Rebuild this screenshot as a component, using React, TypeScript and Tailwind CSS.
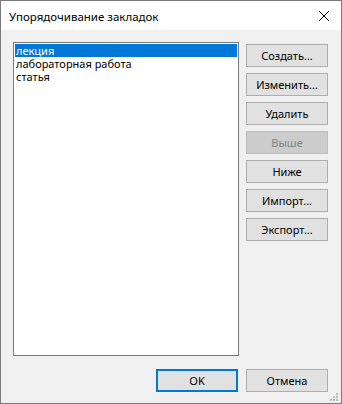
import React from "react";

const font = { fontFamily: '"Noto Sans", "Liberation Sans", sans-serif' };

function Btn({ label, disabled }: { label: string; disabled?: boolean }) {
  return (
    <div
      className={
        "h-[23px] w-[82px] flex items-center justify-center text-[11px] leading-[13px] border " +
        (disabled
          ? "bg-[#cccccc] border-[#bfbfbf] text-[#838383]"
          : "bg-[#e1e1e1] border-[#adadad] text-black")
      }
    >
      {label}
    </div>
  );
}

export default function App() {
  const items = ["лекция", "лабораторная работа", "статья"];
  return (
    <div
      className="relative w-[342px] h-[404px] border border-[#7a7a7a] flex flex-col bg-[#f0f0f0] overflow-hidden"
      style={font}
    >
      <div className="h-[29px] bg-white flex items-center justify-between pl-[8px] pr-[9px] shrink-0">
        <span className="text-[11.5px] text-black leading-[13px] mt-[1px]">Упорядочивание закладок</span>
        <svg width="12" height="12" viewBox="0 0 12 12" className="mr-[2px]">
          <path d="M1 1 L11 11 M11 1 L1 11" stroke="#000" strokeWidth="1" fill="none" />
        </svg>
      </div>
      <div className="flex-1 flex flex-col pl-[12px] pt-[12px]">
        <div className="flex">
          <div className="w-[226px] h-[314px] bg-white border border-[#7a7a7a] p-[1px] shrink-0">
            {items.map((t, i) => (
              <div
                key={t}
                className={
                  "h-[13px] flex items-center pl-[1px] text-[11px] leading-[13px] whitespace-nowrap " +
                  (i === 0 ? "bg-[#0078d7] text-white" : "text-black")
                }
              >
                {t}
              </div>
            ))}
          </div>
          <div className="flex flex-col gap-[6px] ml-[7px] pt-[2px]">
            <Btn label="Создать..." />
            <Btn label="Изменить..." />
            <Btn label="Удалить" />
            <Btn label="Выше" disabled />
            <Btn label="Ниже" />
            <Btn label="Импорт..." />
            <Btn label="Экспорт..." />
          </div>
        </div>
        <div className="flex gap-[8px] mt-[13px] ml-[143px]">
          <div className="h-[23px] w-[82px] flex items-center justify-center text-[11px] leading-[13px] bg-[#e1e1e1] border-2 border-[#0078d7] text-black">
            OK
          </div>
          <Btn label="Отмена" />
        </div>
      </div>
      <div className="absolute right-[3px] bottom-[2px] w-[8px] h-[8px]">
        <div className="absolute left-[6px] top-0 w-[2px] h-[2px] bg-[#bcbcbc]" />
        <div className="absolute left-[3px] top-[3px] w-[2px] h-[2px] bg-[#bcbcbc]" />
        <div className="absolute left-[6px] top-[3px] w-[2px] h-[2px] bg-[#bcbcbc]" />
        <div className="absolute left-0 top-[6px] w-[2px] h-[2px] bg-[#bcbcbc]" />
        <div className="absolute left-[3px] top-[6px] w-[2px] h-[2px] bg-[#bcbcbc]" />
        <div className="absolute left-[6px] top-[6px] w-[2px] h-[2px] bg-[#bcbcbc]" />
      </div>
    </div>
  );
}
